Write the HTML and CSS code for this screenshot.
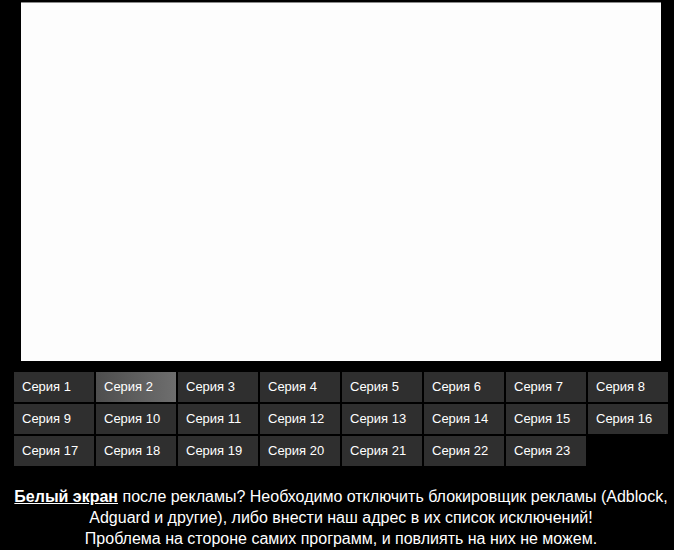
FILE: index.html
```html
<!DOCTYPE html>
<html lang="ru">
<head>
<meta charset="utf-8">
<link rel="stylesheet" href="styles.css">
</head>
<body>
<div class="wrap">
  <div class="player"></div>
  <div class="series">
    <div class="ep">Серия 1</div>
    <div class="ep active">Серия 2</div>
    <div class="ep">Серия 3</div>
    <div class="ep">Серия 4</div>
    <div class="ep">Серия 5</div>
    <div class="ep">Серия 6</div>
    <div class="ep">Серия 7</div>
    <div class="ep">Серия 8</div>
    <div class="ep">Серия 9</div>
    <div class="ep">Серия 10</div>
    <div class="ep">Серия 11</div>
    <div class="ep">Серия 12</div>
    <div class="ep">Серия 13</div>
    <div class="ep">Серия 14</div>
    <div class="ep">Серия 15</div>
    <div class="ep">Серия 16</div>
    <div class="ep">Серия 17</div>
    <div class="ep">Серия 18</div>
    <div class="ep">Серия 19</div>
    <div class="ep">Серия 20</div>
    <div class="ep">Серия 21</div>
    <div class="ep">Серия 22</div>
    <div class="ep">Серия 23</div>
  </div>
  <p class="note"><a class="hl" href="#">Белый экран</a> после рекламы? Необходимо отключить блокировщик рекламы (Adblock, Adguard и другие), либо внести наш адрес в их список исключений!<br>Проблема на стороне самих программ, и повлиять на них не можем.</p>
</div>
</body>
</html>
```
FILE: styles.css
```css
html, body {
  margin: 0;
  padding: 0;
  background: #000;
}
body {
  font-family: "Liberation Sans", Arial, sans-serif;
  color: #fff;
}
.wrap {
  width: 654px;
  margin-left: 14px;
  padding-top: 2px;
}
.player {
  width: 640px;
  height: 358px;
  margin: 0 auto;
  background: #fdfdfd;
  border-top: 1px solid #8a8a8a;
}
.series {
  margin-top: 11px;
  display: grid;
  grid-template-columns: repeat(8, 80px);
  grid-auto-rows: 30px;
  gap: 2px;
}
.ep {
  background: #2f2f2f;
  font-size: 13px;
  line-height: 30px;
  padding-left: 8px;
  color: #fff;
}
.ep.active {
  background: linear-gradient(to right, #4e4e4e, #6e6e6e);
}
.note {
  margin: 20px 0 0;
  text-align: center;
  font-size: 16px;
  line-height: 21px;
}
.hl {
  color: #fff;
  font-weight: bold;
  text-decoration: underline;
}
```
